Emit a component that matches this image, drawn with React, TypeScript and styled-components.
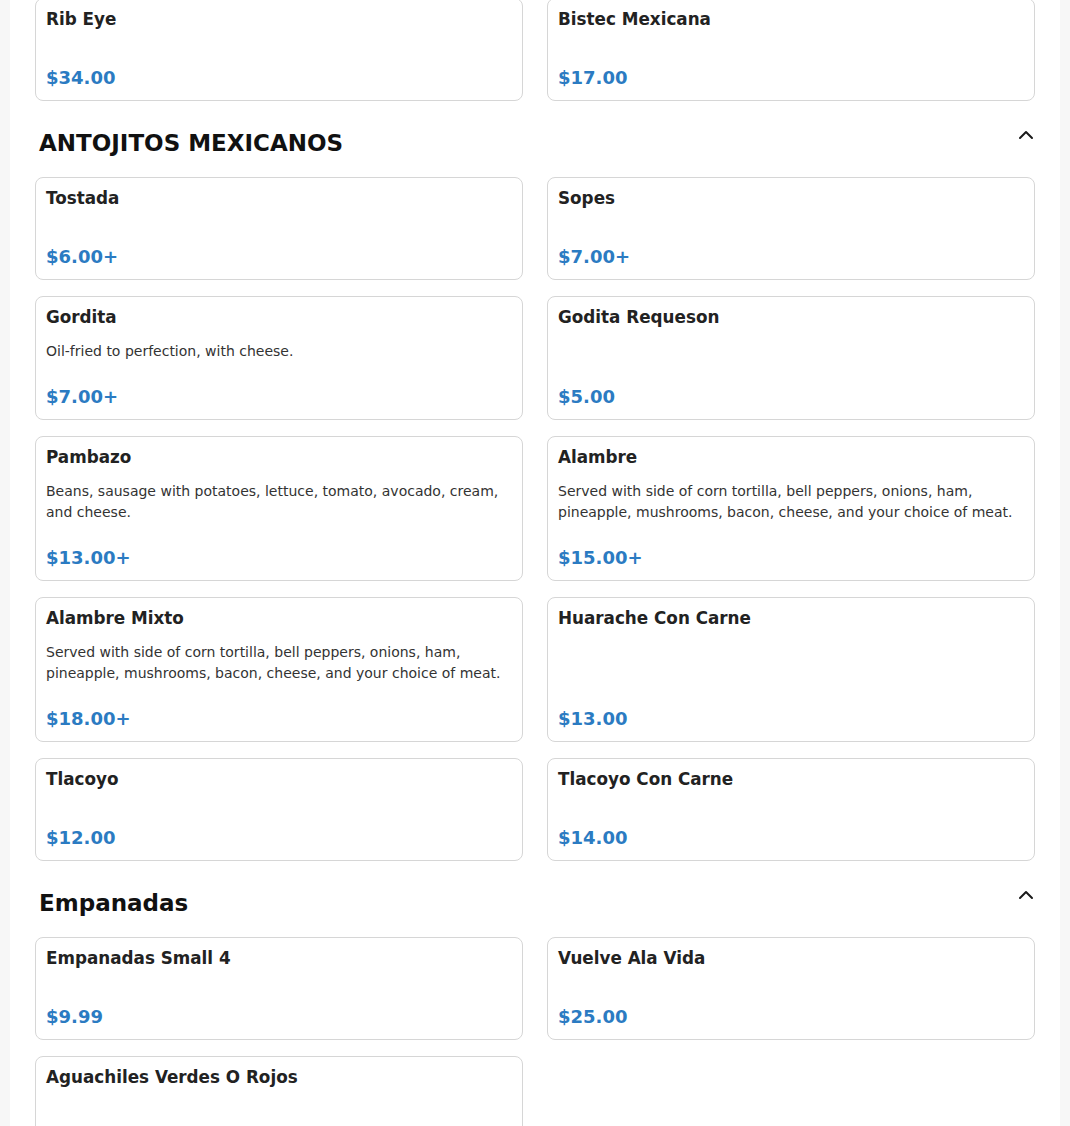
import React from 'react'
import styled, { createGlobalStyle } from 'styled-components'
import { ChevronUp } from 'lucide-react'

const GlobalStyle = createGlobalStyle`
  html, body {
    margin: 0;
    padding: 0;
    background: #f7f7f7;
    font-family: "DejaVu Sans", Verdana, sans-serif;
  }
  * {
    box-sizing: border-box;
  }
`

type Item = { name: string; desc?: string; price: string }
type Section = { title?: string; items: Item[] }

const sections: Section[] = [
  {
    items: [
      { name: 'Rib Eye', price: '$34.00' },
      { name: 'Bistec Mexicana', price: '$17.00' }
    ]
  },
  {
    title: 'ANTOJITOS MEXICANOS',
    items: [
      { name: 'Tostada', price: '$6.00+' },
      { name: 'Sopes', price: '$7.00+' },
      { name: 'Gordita', desc: 'Oil-fried to perfection, with cheese.', price: '$7.00+' },
      { name: 'Godita Requeson', price: '$5.00' },
      {
        name: 'Pambazo',
        desc: 'Beans, sausage with potatoes, lettuce, tomato, avocado, cream, and cheese.',
        price: '$13.00+'
      },
      {
        name: 'Alambre',
        desc: 'Served with side of corn tortilla, bell peppers, onions, ham, pineapple, mushrooms, bacon, cheese, and your choice of meat.',
        price: '$15.00+'
      },
      {
        name: 'Alambre Mixto',
        desc: 'Served with side of corn tortilla, bell peppers, onions, ham, pineapple, mushrooms, bacon, cheese, and your choice of meat.',
        price: '$18.00+'
      },
      { name: 'Huarache Con Carne', price: '$13.00' },
      { name: 'Tlacoyo', price: '$12.00' },
      { name: 'Tlacoyo Con Carne', price: '$14.00' }
    ]
  },
  {
    title: 'Empanadas',
    items: [
      { name: 'Empanadas Small 4', price: '$9.99' },
      { name: 'Vuelve Ala Vida', price: '$25.00' },
      { name: 'Aguachiles Verdes O Rojos', price: '$20.00' }
    ]
  }
]

const App = () => {
  return (
    <>
      <GlobalStyle />
      <Page>
        {sections.map((section, i) => (
          <div key={i}>
            {section.title && (
              <SectionHeader>
                <SectionTitle>{section.title}</SectionTitle>
                <CollapseButton aria-label="Collapse">
                  <ChevronUp size={24} strokeWidth={2} />
                </CollapseButton>
              </SectionHeader>
            )}
            <ItemGrid $first={i === 0}>
              {section.items.map(item => (
                <ItemCard key={item.name}>
                  <ItemName>{item.name}</ItemName>
                  <ItemDesc>{item.desc}</ItemDesc>
                  <ItemPrice>{item.price}</ItemPrice>
                </ItemCard>
              ))}
            </ItemGrid>
          </div>
        ))}
      </Page>
    </>
  )
}

export default App

const Page = styled.main`
  max-width: 1050px;
  margin: 0 auto;
  min-height: 1200px;
  padding: 0 25px 40px;
  background: #ffffff;
`

const SectionHeader = styled.div`
  display: flex;
  align-items: flex-start;
  justify-content: space-between;
  padding: 22px 0 20px 4px;
`

const SectionTitle = styled.h2`
  margin: 6px 0 0;
  font-size: 23px;
  line-height: 28px;
  font-weight: 700;
  color: #111;
`

const CollapseButton = styled.button`
  display: flex;
  align-items: center;
  justify-content: center;
  width: 24px;
  height: 24px;
  margin-right: -3px;
  padding: 0;
  border: none;
  background: transparent;
  color: #1a1a1a;
  cursor: pointer;
`

const ItemGrid = styled.div<{ $first?: boolean }>`
  display: grid;
  grid-template-columns: 1fr 1fr;
  column-gap: 24px;
  row-gap: 16px;
  margin-top: ${({ $first }) => ($first ? '-2px' : '0')};
`

const ItemCard = styled.div`
  display: flex;
  flex-direction: column;
  padding: 10px 10px 9px;
  border: 1px solid #d6d6d6;
  border-radius: 8px;
  background: #fff;
`

const ItemName = styled.h3`
  margin: 0;
  font-size: 16.8px;
  line-height: 21px;
  font-weight: 700;
  color: #222;
`

const ItemDesc = styled.p`
  margin: 13px 0 0;
  font-size: 14px;
  line-height: 21px;
  color: #333;
`

const ItemPrice = styled.div`
  margin-top: auto;
  padding-top: 21px;
  font-size: 18px;
  line-height: 27px;
  font-weight: 700;
  color: #2b7bc2;
`
